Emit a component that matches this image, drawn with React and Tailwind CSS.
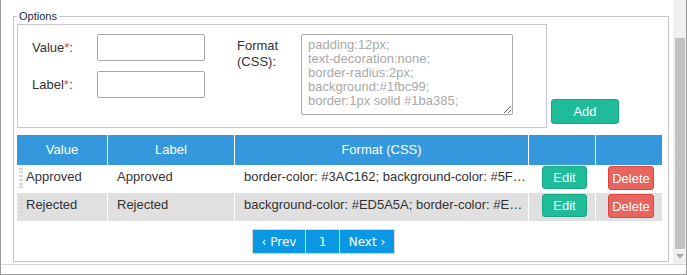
import React from 'react';

const rows = [
  {
    value: 'Approved',
    label: 'Approved',
    format: 'border-color: #3AC162; background-color: #5FD17F; color: #ffffff;',
    bg: 'bg-white',
  },
  {
    value: 'Rejected',
    label: 'Rejected',
    format: 'background-color: #ED5A5A; border-color: #E04B4B; color: #ffffff;',
    bg: 'bg-[#e0e0e0]',
  },
];

const Grip = () => (
  <div className="w-[4px] h-[20px] mt-[-1px] border-x-2 border-dotted border-[#d8d8d8] shrink-0" />
);

export default function App() {
  return (
    <div className="w-[687px] h-[275px] bg-white border-x border-b border-[#9a9a9a] font-['Liberation_Sans',Arial,sans-serif] text-[13px] text-[#333] overflow-hidden">
      <div className="h-[265px] flex border-b border-[#d6d6d6]">
        <div className="w-[672px] pt-[10px] pl-[12px] pr-[4px]">
          <fieldset className="h-[252px] border border-[#c4c4c4] pl-[3px] pr-[6px] pt-[1px]">
            <legend className="px-[2px] text-[11px] leading-[13px] text-[#1b2b44]">Options</legend>

            <div className="flex items-end">
              <div className="w-[530px] h-[104px] border border-[#c8c8c8] pl-[14px] pt-[9px] flex">
                <div className="flex flex-col gap-[10px]">
                  <div className="flex items-center">
                    <span className="w-[65px]">
                      Value<span className="text-[#e8453c]">*</span>:
                    </span>
                    <input className="w-[108px] h-[27px] border border-[#a9a9a9] rounded-[2px] px-1 outline-none" />
                  </div>
                  <div className="flex items-center">
                    <span className="w-[65px]">
                      Label<span className="text-[#e8453c]">*</span>:
                    </span>
                    <input className="w-[108px] h-[27px] border border-[#a9a9a9] rounded-[2px] px-1 outline-none" />
                  </div>
                </div>
                <div className="flex ml-[32px]">
                  <div className="w-[64px] pt-[4px] leading-[16px]">
                    Format
                    <br />
                    (CSS):
                  </div>
                  <textarea
                    className="w-[212px] h-[81px] border border-[#a9a9a9] rounded-[2px] px-[6px] pt-[3px] leading-[14px] text-[13px] placeholder:text-[#a9a9a9] outline-none"
                    placeholder={'padding:12px;\ntext-decoration:none;\nborder-radius:2px;\nbackground:#1fbc99;\nborder:1px solid #1ba385;'}
                  />
                </div>
              </div>
              <button className="ml-[4px] mb-[4px] w-[68px] h-[25px] bg-[#1fbc99] border border-[#1ba385] rounded-[3px] text-white text-[13px]">
                Add
              </button>
            </div>

            <div className="mt-[7px] grid grid-cols-[90px_126px_293px_66px_66px] gap-x-px bg-white">
              <div className="h-[30px] bg-[#3598dc] text-white flex items-center justify-center">Value</div>
              <div className="h-[30px] bg-[#3598dc] text-white flex items-center justify-center">Label</div>
              <div className="h-[30px] bg-[#3598dc] text-white flex items-center justify-center">Format (CSS)</div>
              <div className="h-[30px] bg-[#3598dc]" />
              <div className="h-[30px] bg-[#3598dc]" />

              {rows.map((r) => (
                <React.Fragment key={r.value}>
                  <div className={`h-[28px] ${r.bg} flex items-start pt-[4px] pl-[2px] gap-[3px] leading-[15px]`}>
                    <Grip />
                    <span>{r.value}</span>
                  </div>
                  <div className={`h-[28px] ${r.bg} pt-[4px] pl-[9px] leading-[15px]`}>{r.label}</div>
                  <div className={`h-[28px] ${r.bg} pt-[4px] pl-[9px] leading-[15px] min-w-0 truncate`}>
                    {r.format}
                  </div>
                  <div className={`h-[28px] ${r.bg} pt-[1px] pl-[13px]`}>
                    <button className="w-[45px] h-[23px] bg-[#1fbc99] border border-[#1ba385] rounded-[3px] text-white text-[13px] leading-[15px]">
                      Edit
                    </button>
                  </div>
                  <div className={`h-[28px] ${r.bg} pt-[1px] pl-[12px]`}>
                    <button className="w-[46px] h-[24px] bg-[#e8645f] border border-[#d9463f] rounded-[3px] text-white text-[13px] leading-[15px]">
                      Delete
                    </button>
                  </div>
                </React.Fragment>
              ))}
            </div>

            <div className="mt-[8px] ml-[235px] flex font-['DejaVu_Sans',Verdana,sans-serif] text-[12px] text-white">
              <button className="w-[54px] h-[25px] bg-[#0a97e4] border border-[#d8d8d8]">‹ Prev</button>
              <button className="w-[34px] h-[25px] bg-[#0a97e4] border border-l-0 border-[#d8d8d8]">1</button>
              <button className="w-[55px] h-[25px] bg-[#0a97e4] border border-l-0 border-[#d8d8d8]">Next ›</button>
            </div>
          </fieldset>
        </div>

        <div className="w-[13px] h-full bg-[#f0f0f0] flex flex-col">
          <div className="h-[38px]" />
          <div className="ml-[2px] w-[10px] h-[211px] bg-[#c1c1c1]" />
          <div className="flex-1 flex items-center justify-center">
            <svg width="8" height="5" viewBox="0 0 8 5">
              <path d="M0 0 L8 0 L4 4.5 Z" fill="#a3a3a3" />
            </svg>
          </div>
        </div>
      </div>
    </div>
  );
}
